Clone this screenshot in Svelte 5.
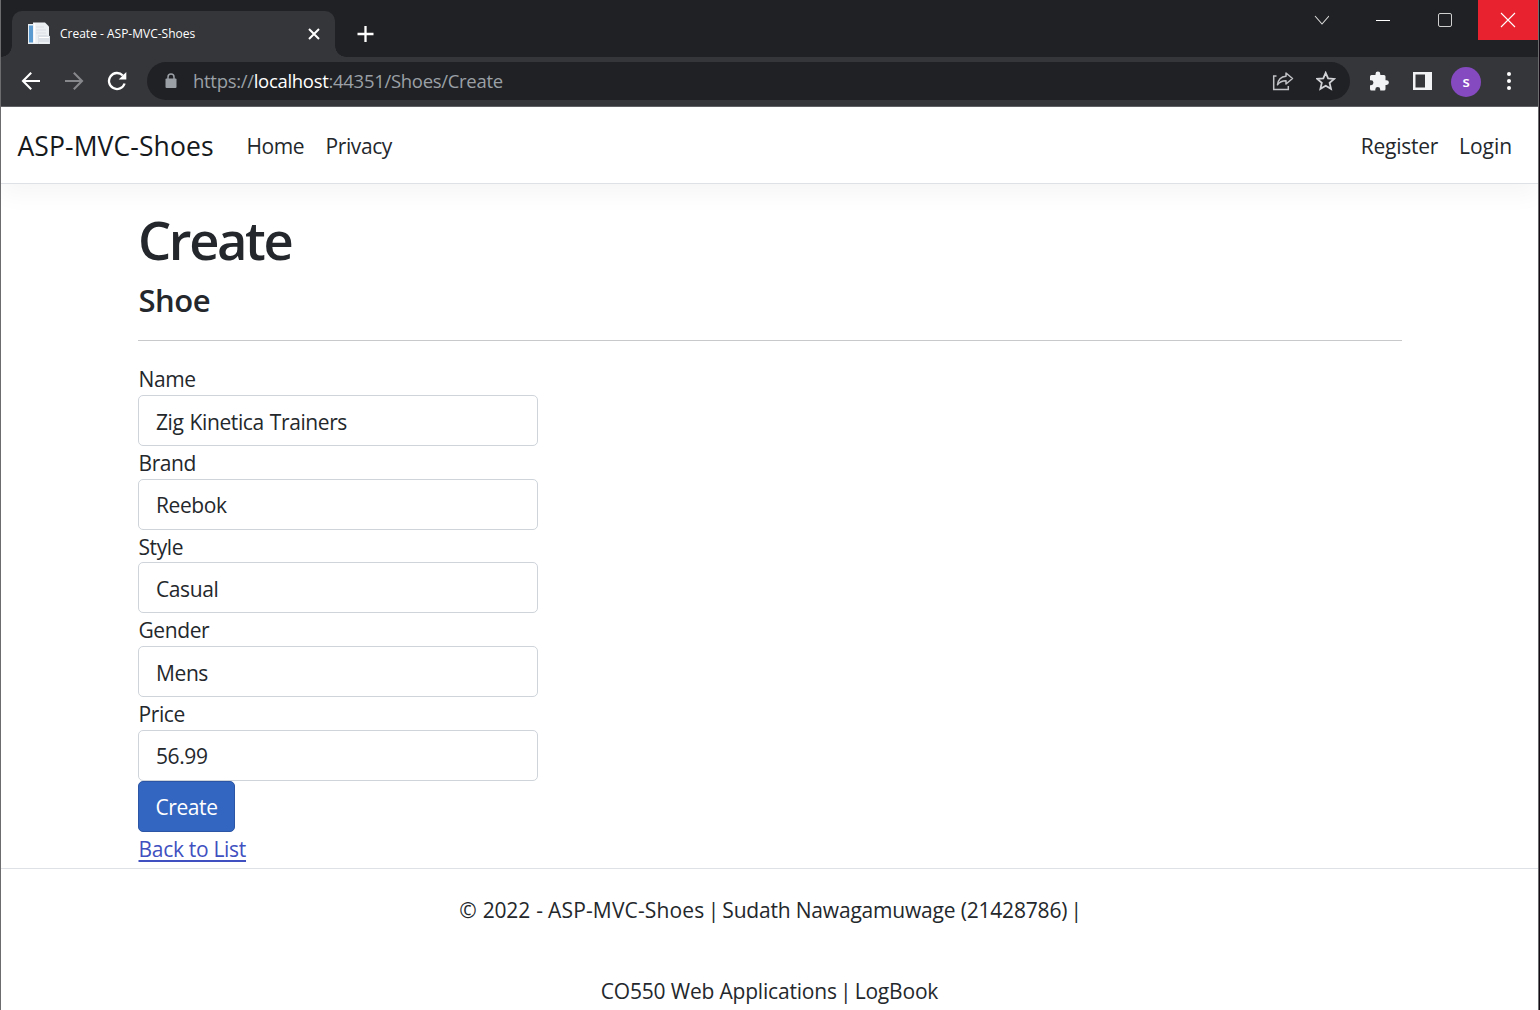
<script>
  const fields = $state([
    { id: 'name', label: 'Name', value: 'Zig Kinetica Trainers' },
    { id: 'brand', label: 'Brand', value: 'Reebok' },
    { id: 'style', label: 'Style', value: 'Casual' },
    { id: 'gender', label: 'Gender', value: 'Mens' },
    { id: 'price', label: 'Price', value: '56.99' }
  ]);
</script>

<div class="window">
  <div class="tabstrip">
    <div class="tab">
      <svg class="favicon" width="24" height="24" viewBox="0 0 24 24">
        <rect x="1" y="2" width="12" height="20" fill="#e9eef3" />
        <rect x="2" y="3.5" width="4" height="17" fill="#5c9bd0" />
        <path d="M6 0.5h12l4 4V21H6z" fill="#edf0f3" />
        <path d="M7.5 1.5v19" stroke="#fff" stroke-width="1.5" />
        <path d="M9 5h8M9 8h10M9 11h10" stroke="#dbe0e5" />
        <path d="M11 13h8l4 1v8H11z" fill="#dbe1e7" />
        <path d="M12 15.5h10M12 21h10" stroke="#fff" />
      </svg>
      <span class="tab-title">Create - ASP-MVC-Shoes</span>
      <svg class="tab-close" width="12" height="12" viewBox="0 0 12 12"><path d="M1 1l10 10M11 1L1 11" stroke="#fff" stroke-width="2" /></svg>
    </div>
    <svg class="newtab" width="16" height="16" viewBox="0 0 16 16"><path d="M8.5 0v16M0.5 8h16" stroke="#fff" stroke-width="2.3" /></svg>
    <div class="controls">
      <div class="control"><svg width="16" height="16" viewBox="0 0 16 16"><path d="M2 4l7 8 7-8" fill="none" stroke="#dcdcdc" stroke-width="1.1" /></svg></div>
      <div class="control"><svg width="16" height="16" viewBox="0 0 16 16"><path d="M1 8.5h14" stroke="#fff" /></svg></div>
      <div class="control maximize"><svg width="16" height="16" viewBox="0 0 16 16"><rect x="1.5" y="1.5" width="13" height="13" rx="1.5" fill="none" stroke="#d0d0d0" /></svg></div>
      <div class="control close"><svg width="16" height="16" viewBox="0 0 16 16"><path d="M1 1l14 14M15 1L1 15" stroke="#fff" stroke-width="1.1" /></svg></div>
    </div>
  </div>

  <div class="toolbar">
    <svg class="nav-icon" width="20" height="20" viewBox="0 0 20 20"><path d="M19 10H2M10.2 1.8L2 10l8.2 8.2" fill="none" stroke="#fff" stroke-width="2.1" /></svg>
    <svg class="nav-icon" width="20" height="20" viewBox="0 0 20 20"><path d="M1 10h17M9.8 1.8L18 10l-8.2 8.2" fill="none" stroke="#87888b" stroke-width="2.1" /></svg>
    <svg class="nav-icon" width="20" height="20" viewBox="0 0 20 20"><path d="M17.6 12.5A8 8 0 1 1 15.8 4.5" fill="none" stroke="#fff" stroke-width="2.3" /><path d="M19.3 1v7.6h-7.6z" fill="#fff" /></svg>
    <div class="omnibox">
      <svg class="lock" width="12" height="16" viewBox="0 0 12 16"><path d="M3 6.5V4a3 3 0 0 1 6 0v2.5" fill="none" stroke="#9aa0a6" stroke-width="1.5" /><rect x="0.5" y="5.5" width="11" height="9.5" rx="1" fill="#9aa0a6" /></svg>
      <span class="url">https://<b>localhost</b>:44351/Shoes/Create</span>
      <svg class="share" width="22" height="20" viewBox="0 0 22 20"><path d="M4.5 5H1.7v13.5h14.6V15" fill="none" stroke="#bfc1c4" stroke-width="1.5" /><path d="M14 2l6.5 5.5L14 13v-3.2c-4 0-6.5 1.2-8.5 4C6 9 8.5 5.7 14 5.2z" fill="none" stroke="#bfc1c4" stroke-width="1.5" stroke-linejoin="round" /></svg>
      <svg width="20" height="20" viewBox="0 0 20 20"><path d="M9.7 1.8l2.4 5.6 6.1.5-4.6 4 1.4 5.9-5.3-3.1-5.3 3.1 1.4-5.9-4.6-4 6.1-.5z" fill="none" stroke="#d0d2d5" stroke-width="1.8" /></svg>
    </div>
    <svg class="puzzle" width="20" height="20" viewBox="0 0 20 20"><path d="M1 5.5a1.5 1.5 0 0 1 1.5-1.5H6.5V3a2.4 2.4 0 0 1 4.8 0v1h3.7a1.5 1.5 0 0 1 1.5 1.5v3.7h1a2.4 2.4 0 0 1 0 4.8h-1v4a1.5 1.5 0 0 1-1.5 1.5h-3.8v-1a2.4 2.4 0 0 0-4.9 0v1H2.5A1.5 1.5 0 0 1 1 18v-3.8h1a2.4 2.4 0 0 0 0-4.9H1z" fill="#f1f3f4" /></svg>
    <svg class="panel" width="20" height="20" viewBox="0 0 20 20"><path fill-rule="evenodd" d="M0 1h19v18h-19zM2.5 3.5v13h9.5v-13z" fill="#f1f3f4" /></svg>
    <div class="avatar">s</div>
    <svg class="more" width="6" height="20" viewBox="0 0 6 20"><circle cx="3" cy="3" r="2" fill="#fff" /><circle cx="3" cy="10" r="2" fill="#fff" /><circle cx="3" cy="17" r="2" fill="#fff" /></svg>
  </div>

  <header class="navbar">
    <span class="site-name">ASP-MVC-Shoes</span>
    <span class="home">Home</span>
    <span>Privacy</span>
    <span class="register">Register</span>
    <span class="login">Login</span>
  </header>

  <main>
    <h1>Create</h1>
    <h4>Shoe</h4>
    <hr />
    <form>
      {#each fields as field (field.id)}
        <label for={field.id}>{field.label}</label>
        <input id={field.id} bind:value={field.value} />
      {/each}
      <button type="button">Create</button>
    </form>
    <div class="back"><a href="#list">Back to List</a></div>
  </main>

  <footer>
    <p><span class="year">© 2022 -</span> <span class="app">ASP-MVC-Shoes</span> <span class="bar">|</span> Sudath Nawagamuwage (21428786) <span class="bar">|</span></p>
    <p>CO550 Web Applications <span class="bar">|</span> LogBook</p>
  </footer>
</div>

<style>
  :global(body) {
    margin: 0;
    overflow: hidden;
    background: #150b17;
  }
  .window {
    box-sizing: border-box;
    width: 1539px;
    height: 1010px;
    overflow: hidden;
    display: flex;
    flex-direction: column;
    border-left: 1px solid #6c6c6e;
    border-right: 1px solid #6c6c6e;
    background: #fff;
    color: #24282c;
    font-family: 'Open Sans', 'Noto Sans', sans-serif;
    font-size: 21px;
    letter-spacing: -0.4px;
  }
  .tabstrip {
    flex: none;
    display: flex;
    height: 57px;
    background: #202124;
  }
  .tab {
    position: relative;
    box-sizing: border-box;
    display: flex;
    align-items: center;
    width: 323px;
    height: 46px;
    margin: 11px 0 0 11px;
    padding: 0 15px;
    border-radius: 10px 10px 0 0;
    background: #35363a;
  }
  .tab::before,
  .tab::after {
    content: '';
    position: absolute;
    bottom: 0;
    width: 11px;
    height: 11px;
  }
  .tab::before {
    left: -11px;
    background: radial-gradient(circle at 0 0, #202124 10.5px, #35363a 11px);
  }
  .tab::after {
    right: -11px;
    background: radial-gradient(circle at 100% 0, #202124 10.5px, #35363a 11px);
  }
  .tab-title {
    margin: -1px 0 0 9px;
    color: #fff;
    font-size: 12px;
    letter-spacing: 0;
  }
  .tab-close {
    margin-left: auto;
  }
  .newtab {
    overflow: visible;
    margin: 26px 0 0 22px;
  }
  .controls {
    display: flex;
    margin-left: auto;
    height: 40px;
  }
  .control {
    display: flex;
    align-items: center;
    justify-content: center;
    width: 62px;
  }
  .maximize {
    margin-right: 2px;
  }
  .close {
    width: 60px;
    background: #e8232f;
  }
  .toolbar {
    box-sizing: border-box;
    flex: none;
    display: flex;
    align-items: center;
    height: 50px;
    padding: 0 26px 1px 20px;
    border-bottom: 1px solid #606164;
    background: #35363a;
  }
  .nav-icon {
    flex: none;
    margin-right: 23px;
  }
  .omnibox {
    box-sizing: border-box;
    flex: none;
    display: flex;
    align-items: center;
    width: 1203px;
    height: 38px;
    margin-left: -3px;
    padding: 0 14px 0 18px;
    border-radius: 19px;
    background: #202124;
  }
  .url {
    margin: -2px 0 0 16px;
    color: #9aa0a6;
    font-size: 18.5px;
    letter-spacing: -0.3px;
  }
  .url b {
    color: #fff;
    font-weight: 400;
  }
  .share {
    margin: 0 22px 0 auto;
  }
  .puzzle {
    margin-left: 19px;
  }
  .panel {
    margin-left: 24px;
  }
  .avatar {
    width: 30px;
    height: 30px;
    margin: 1px 0 0 18px;
    border-radius: 50%;
    background: #8549c0;
    color: #fff;
    font-size: 15px;
    font-weight: 600;
    line-height: 28px;
    text-align: center;
  }
  .more {
    margin-left: 25px;
  }
  .navbar {
    box-sizing: border-box;
    flex: none;
    display: flex;
    align-items: center;
    height: 77px;
    padding: 2px 26px 0 16.5px;
    border-bottom: 1px solid #dee2e6;
    box-shadow: 0 11px 22px rgba(0, 0, 0, 0.04);
  }
  .site-name {
    width: 229px;
    color: #16191c;
    font-size: 26.5px;
    letter-spacing: 0.1px;
  }
  .home {
    width: 79px;
  }
  .register {
    margin-left: auto;
    margin-right: 21px;
    letter-spacing: -0.25px;
  }
  .login {
    letter-spacing: -0.05px;
  }
  main {
    flex: none;
    width: 1264px;
    padding: 20px 0 0 137px;
  }
  h1,
  h4 {
    margin: 0;
    font-weight: 600;
  }
  h1 {
    height: 76px;
    font-size: 52.5px;
    line-height: 71px;
    letter-spacing: -2.4px;
  }
  h4 {
    height: 60px;
    padding-left: 0.5px;
    font-size: 31px;
    line-height: 40px;
    letter-spacing: -0.5px;
  }
  hr {
    height: 1px;
    margin: 0 0 21.3px;
    border: 0;
    background: #c8c9ca;
  }
  form {
    width: 400px;
  }
  label {
    display: block;
    height: 32.7px;
    padding-left: 0.5px;
    line-height: 35.4px;
  }
  input,
  button {
    box-sizing: border-box;
    display: block;
    height: 51px;
    margin: 0;
    border: 1px solid #ced4da;
    border-radius: 5px;
    background: #fff;
    color: inherit;
    font: inherit;
    letter-spacing: inherit;
  }
  input {
    width: 400px;
    padding: 2.5px 17px 0;
    word-spacing: 1px;
  }
  button {
    width: 97px;
    padding: 1px 0 0;
    border-color: #2c56a5;
    background: #3366c0;
    color: #fff;
  }
  .back {
    height: 36px;
    padding-left: 0.5px;
    line-height: 35px;
    letter-spacing: -0.3px;
  }
  a {
    color: #4050c0;
    text-decoration-thickness: 2px;
    text-underline-offset: 3px;
  }
  footer {
    flex: 1;
    border-top: 1px solid #dee2e6;
    letter-spacing: -0.19px;
    text-align: center;
  }
  footer p {
    margin: 0;
    height: 81px;
    line-height: 83px;
  }
  .year {
    word-spacing: 1px;
  }
  .app {
    letter-spacing: 0.15px;
  }
  .bar {
    margin: 0 -2px;
  }
</style>
